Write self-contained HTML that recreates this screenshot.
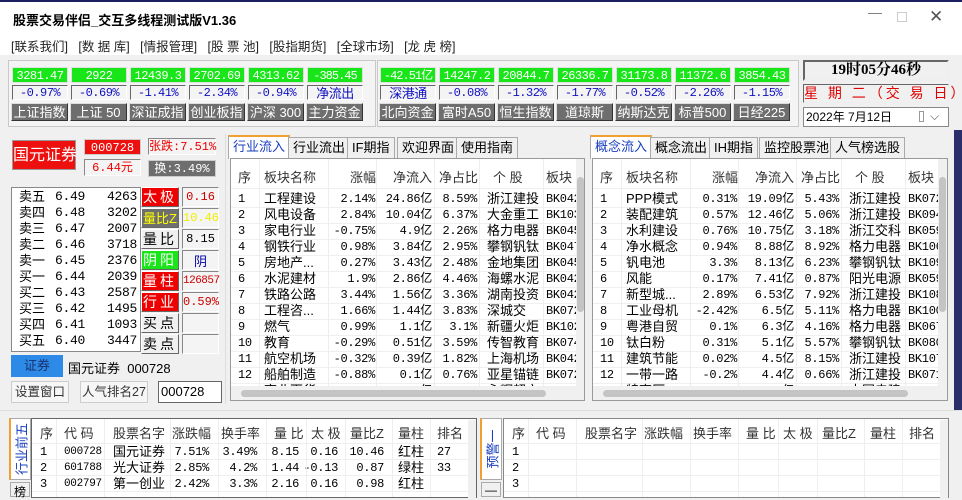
<!DOCTYPE html>
<html><head><meta charset="utf-8"><style>
*{box-sizing:border-box;margin:0;padding:0}
body{width:962px;height:495px;overflow:hidden;background:#f0f0f0;font-family:"Liberation Sans","Noto Sans CJK SC",sans-serif;font-size:12px;color:#000;position:relative}
.a{position:absolute;white-space:nowrap}
.g{position:absolute;height:16px;background:#19e619;color:#fff;font-family:"Liberation Mono","Noto Sans CJK SC",monospace;font-size:12px;text-align:center;line-height:16px;border:1px solid #e0e0e0;letter-spacing:-.5px;overflow:hidden}
.p{position:absolute;height:15px;background:#f4f4f4;color:#1010c0;font-family:"Liberation Mono","Noto Sans CJK SC",monospace;text-align:center;line-height:14px;border:1px solid;border-color:#666 #fff #fff #666;font-size:12px;letter-spacing:-.5px}
.b{position:absolute;height:18px;background:#6e6e6e;color:#fff;text-align:center;line-height:17px;font-size:13px;border:1px solid;border-color:#ddd #333 #333 #ddd}
.fr{position:absolute;border:1px solid #c8c8c8;background:#f4f4f4}
.tab{position:absolute;top:137px;height:21px;border:1px solid #aaa;border-bottom:none;background:#f0f0f0;font-size:13px;line-height:19px;padding:0 4px}
.tab.on{background:#fff;color:#1a3fbf;top:135px;height:24px;border-top:2px solid #f0a030}
.tb{position:absolute;background:#fff;border:1px solid #999;overflow:hidden}
.r{position:absolute;left:0;height:16px;line-height:16px;font-size:13px;white-space:nowrap}
.r span{position:absolute;top:0}
.m{font-family:"Liberation Mono","Noto Sans CJK SC",monospace;font-size:12px;letter-spacing:-.3px}
.s{font-family:"Liberation Mono",monospace;font-size:11px;letter-spacing:-.3px}
.ob{position:absolute;height:16px;line-height:16px;font-size:13px}
.bt{position:absolute;height:20px;width:38px;text-align:center;line-height:19px;font-size:14px;border:1px solid;border-color:#fff #666 #666 #fff;background:#f0f0f0;letter-spacing:3px}
.vl{position:absolute;width:37px;height:20px;text-align:center;line-height:19px;border:1px solid;border-color:#888 #fff #fff #888;background:#f4f4f4;font-family:"Liberation Mono",monospace;font-size:12px;color:#c00}
.hd{color:#333}
.vt{position:absolute;top:418px;width:22px;height:62px;background:#fff;border:1px solid #aaa;border-left:2px solid #f0a030}
.vt div{position:absolute;left:50%;top:50%;transform:translate(-50%,-50%) rotate(-90deg);color:#1a3fbf;font-size:13px;white-space:nowrap}
</style></head><body>
<div class="a" style="left:0;top:0;width:962px;height:2px;background:#1c2060"></div>
<div class="a" style="left:0;top:2px;width:962px;height:31px;background:#fff"></div>
<div class="a" style="left:13px;top:10px;font-size:13px;font-weight:bold">股票交易伴侣_交互多线程测试版V1.36</div>
<div class="a" style="left:868px;top:4px;font-size:14px;color:#777">—</div>
<div class="a" style="left:897px;top:12px;width:10px;height:10px;border:1px solid #ccc"></div>
<div class="a" style="left:929px;top:7px;font-size:17px;color:#555">✕</div>
<div class="a" style="left:0;top:33px;width:962px;height:22px;background:#fff"></div>
<div class="a" style="left:11px;top:36px;font-size:12.5px;color:#222">[联系我们] &nbsp; [数 据 库] &nbsp; [情报管理] &nbsp; [股 票 池] &nbsp; [股指期货] &nbsp; [全球市场] &nbsp; [龙 虎 榜]</div>

<div class="fr" style="left:8px;top:60px;width:368px;height:67px"></div>
<div class="fr" style="left:377px;top:60px;width:422px;height:67px"></div>
<div class="g" style="left:12px;top:67px;width:56px">3281.47</div>
<div class="g" style="left:71px;top:67px;width:56px">2922</div>
<div class="g" style="left:130px;top:67px;width:56px">12439.3</div>
<div class="g" style="left:189px;top:67px;width:56px">2702.69</div>
<div class="g" style="left:248px;top:67px;width:56px">4313.62</div>
<div class="g" style="left:307px;top:67px;width:56px;letter-spacing:-1px">-385.45亿</div>
<div class="g" style="left:380px;top:67px;width:56px;letter-spacing:-1px">-42.51亿</div>
<div class="g" style="left:439px;top:67px;width:56px">14247.2</div>
<div class="g" style="left:498px;top:67px;width:56px">20844.7</div>
<div class="g" style="left:557px;top:67px;width:56px">26336.7</div>
<div class="g" style="left:616px;top:67px;width:56px">31173.8</div>
<div class="g" style="left:675px;top:67px;width:56px">11372.6</div>
<div class="g" style="left:734px;top:67px;width:56px">3854.43</div>
<div class="p" style="left:12px;top:85px;width:56px">-0.97%</div>
<div class="p" style="left:71px;top:85px;width:56px">-0.69%</div>
<div class="p" style="left:130px;top:85px;width:56px">-1.41%</div>
<div class="p" style="left:189px;top:85px;width:56px">-2.34%</div>
<div class="p" style="left:248px;top:85px;width:56px">-0.94%</div>
<div class="p" style="left:307px;top:85px;width:56px;font-family:'Noto Sans CJK SC';font-size:13px">净流出</div>
<div class="p" style="left:380px;top:85px;width:56px;font-family:'Noto Sans CJK SC';font-size:13px">深港通</div>
<div class="p" style="left:439px;top:85px;width:56px">-0.08%</div>
<div class="p" style="left:498px;top:85px;width:56px">-1.32%</div>
<div class="p" style="left:557px;top:85px;width:56px">-1.77%</div>
<div class="p" style="left:616px;top:85px;width:56px">-0.52%</div>
<div class="p" style="left:675px;top:85px;width:56px">-2.26%</div>
<div class="p" style="left:734px;top:85px;width:56px">-1.15%</div>
<div class="b" style="left:11px;top:103px;width:57px">上证指数</div>
<div class="b" style="left:70px;top:103px;width:57px">上证 50</div>
<div class="b" style="left:129px;top:103px;width:57px">深证成指</div>
<div class="b" style="left:188px;top:103px;width:57px">创业板指</div>
<div class="b" style="left:247px;top:103px;width:57px">沪深 300</div>
<div class="b" style="left:306px;top:103px;width:57px">主力资金</div>
<div class="b" style="left:379px;top:103px;width:57px">北向资金</div>
<div class="b" style="left:438px;top:103px;width:57px">富时A50</div>
<div class="b" style="left:497px;top:103px;width:57px">恒生指数</div>
<div class="b" style="left:556px;top:103px;width:57px">道琼斯</div>
<div class="b" style="left:615px;top:103px;width:57px">纳斯达克</div>
<div class="b" style="left:674px;top:103px;width:57px">标普500</div>
<div class="b" style="left:733px;top:103px;width:57px">日经225</div>
<div class="a" style="left:803px;top:60px;width:146px;height:21px;border:2px solid;border-color:#666 #eee #eee #666;background:#f0f0f0;text-align:center;font:bold 15px 'Liberation Serif','Noto Serif CJK SC',serif;line-height:17px">19时05分46秒</div>
<div class="a" style="left:803px;top:84px;width:146px;height:19px;border:1px solid;border-color:#666 #eee #eee #666;background:#f0f0f0;text-align:center;color:#e00000;font-size:14px;line-height:17px;letter-spacing:3px">星 期 二（交 易 日）</div>
<div class="a" style="left:803px;top:107px;width:146px;height:20px;border:1px solid #888;background:#fff;font-size:12px;line-height:18px;padding-left:2px">2022年 7月12日<span style="position:absolute;left:115px;top:3px;width:5px;height:11px;border:1px solid #999"></span><span style="position:absolute;left:126px;top:-1px;color:#555">⌵</span></div>

<div class="a" style="left:12px;top:140px;width:64px;height:30px;background:#ee0f0f;color:#fff;font-size:16px;text-align:center;line-height:30px;border:1px solid #999">国元证券</div>
<div class="a" style="left:84px;top:139px;width:57px;height:16px;background:#ee0f0f;color:#fff;font-family:'Liberation Mono';font-size:12px;text-align:center;line-height:16px;border:1px solid #ccc">000728</div>
<div class="a" style="left:84px;top:159px;width:57px;height:17px;background:#f4f4f4;color:#e00;font-family:'Liberation Mono','Noto Sans CJK SC';font-size:12px;text-align:center;line-height:17px;border:1px solid;border-color:#888 #fff #fff #888">6.44元</div>
<div class="a" style="left:148px;top:138px;width:68px;height:17px;background:#f4f4f4;color:#e00;font-family:'Liberation Mono','Noto Sans CJK SC';font-size:12px;text-align:center;line-height:17px;border:1px solid;border-color:#888 #fff #fff #888">张跌:7.51%</div>
<div class="a" style="left:148px;top:160px;width:68px;height:17px;background:#6e6e6e;color:#fff;font-family:'Liberation Mono','Noto Sans CJK SC';font-size:12px;text-align:center;line-height:17px;border:1px solid #ccc">换:3.49%</div>
<div class="a" style="left:11px;top:187px;width:130px;height:165px;background:#fff;border:1px solid #888"></div>
<div class="ob" style="left:19px;top:189px">卖五</div><div class="ob m" style="left:55px;top:189px">6.49</div><div class="ob m" style="left:107px;top:189px">4263</div>
<div class="ob" style="left:19px;top:205px">卖四</div><div class="ob m" style="left:55px;top:205px">6.48</div><div class="ob m" style="left:107px;top:205px">3202</div>
<div class="ob" style="left:19px;top:221px">卖三</div><div class="ob m" style="left:55px;top:221px">6.47</div><div class="ob m" style="left:107px;top:221px">2007</div>
<div class="ob" style="left:19px;top:237px">卖二</div><div class="ob m" style="left:55px;top:237px">6.46</div><div class="ob m" style="left:107px;top:237px">3718</div>
<div class="ob" style="left:19px;top:253px">卖一</div><div class="ob m" style="left:55px;top:253px">6.45</div><div class="ob m" style="left:107px;top:253px">2376</div>
<div class="ob" style="left:19px;top:269px">买一</div><div class="ob m" style="left:55px;top:269px">6.44</div><div class="ob m" style="left:107px;top:269px">2039</div>
<div class="ob" style="left:19px;top:285px">买二</div><div class="ob m" style="left:55px;top:285px">6.43</div><div class="ob m" style="left:107px;top:285px">2587</div>
<div class="ob" style="left:19px;top:301px">买三</div><div class="ob m" style="left:55px;top:301px">6.42</div><div class="ob m" style="left:107px;top:301px">1495</div>
<div class="ob" style="left:19px;top:317px">买四</div><div class="ob m" style="left:55px;top:317px">6.41</div><div class="ob m" style="left:107px;top:317px">1093</div>
<div class="ob" style="left:19px;top:333px">买五</div><div class="ob m" style="left:55px;top:333px">6.40</div><div class="ob m" style="left:107px;top:333px">3447</div>
<div class="bt" style="left:141px;top:187px;background:#e00;color:#fff">太极</div><div class="vl" style="left:182px;top:187px">0.16</div>
<div class="bt" style="left:141px;top:208px;background:#6e6e6e;color:#ff0;font-size:13px;letter-spacing:0">量比Z</div><div class="vl" style="left:182px;top:208px;color:#ee0">10.46</div>
<div class="bt" style="left:141px;top:229px">量比</div><div class="vl" style="left:182px;top:229px;color:#000">8.15</div>
<div class="bt" style="left:141px;top:250px;background:#19e619;color:#fff">阴阳</div><div class="vl" style="left:182px;top:250px;color:#00a;font-family:'Noto Sans CJK SC';font-size:13px">阴</div>
<div class="bt" style="left:141px;top:271px;background:#e00;color:#fff">量柱</div><div class="vl" style="left:182px;top:271px;font-size:11px;letter-spacing:-.5px">126857</div>
<div class="bt" style="left:141px;top:292px;background:#e00;color:#fff">行业</div><div class="vl" style="left:182px;top:292px">0.59%</div>
<div class="bt" style="left:141px;top:313px">买点</div><div class="vl" style="left:182px;top:313px"></div>
<div class="bt" style="left:141px;top:334px">卖点</div><div class="vl" style="left:182px;top:334px"></div>
<div class="a" style="left:11px;top:355px;width:52px;height:22px;background:#2d8ae6;color:#1a3070;font-size:13px;text-align:center;line-height:22px">证券</div>
<div class="a" style="left:68px;top:358px;font-size:13px">国元证券 &nbsp;000728</div>
<div class="a" style="left:11px;top:381px;width:58px;height:22px;border:1px solid #ccc;background:#f6f6f6;font-size:12.5px;text-align:center;line-height:20px;color:#333">设置窗口</div>
<div class="a" style="left:80px;top:381px;width:68px;height:22px;border:1px solid #ccc;background:#f6f6f6;font-size:12.5px;text-align:center;line-height:20px;color:#333">人气排名27</div>
<div class="a" style="left:158px;top:381px;width:64px;height:22px;border:1px solid #666;background:#fff;font-size:13px;line-height:20px;padding-left:2px">000728</div>

<div class="a" style="left:225px;top:134px;width:1px;height:270px;background:#ddd"></div>
<div class="tab on" style="left:228px">行业流入</div>
<div class="tab" style="left:288px">行业流出</div>
<div class="tab" style="left:347px">IF期指</div>
<div class="tab" style="left:397px">欢迎界面</div>
<div class="tab" style="left:456px">使用指南</div>
<div class="tb" style="left:230px;top:158px;width:355px;height:243px">
<div class="r hd" style="top:11px;width:345px"><span style="left:7px">序</span><span style="left:33px">板块名称</span><span style="right:200px">涨幅</span><span style="right:144px">净流入</span><span style="right:98px">净占比</span><span style="left:262px">个 股</span><span style="left:315px">板块</span></div>
<div style="position:absolute;left:0;top:29px;width:345px;height:1px;background:#eee"></div>
<div id="L"></div>
<div style="position:absolute;left:345px;top:0;width:9px;height:240px;background:#f0f0f0"></div>
<div style="position:absolute;left:346px;top:18px;width:7px;height:135px;border-radius:4px;background:#c4c4c4"></div>
<div style="position:absolute;left:0;top:227px;width:354px;height:14px;background:#f0f0f0"></div>
<div style="position:absolute;left:10px;top:231px;width:305px;height:7px;border-radius:4px;background:#c4c4c4"></div>
</div>

<div class="tab on" style="left:590px">概念流入</div>
<div class="tab" style="left:650px">概念流出</div>
<div class="tab" style="left:709px">IH期指</div>
<div class="tab" style="left:759px">监控股票池</div>
<div class="tab" style="left:830px">人气榜选股</div>
<div class="tb" style="left:592px;top:158px;width:356px;height:243px">
<div class="r hd" style="top:11px;width:345px"><span style="left:7px">序</span><span style="left:33px">板块名称</span><span style="right:200px">涨幅</span><span style="right:144px">净流入</span><span style="right:98px">净占比</span><span style="left:262px">个 股</span><span style="left:315px">板块</span></div>
<div style="position:absolute;left:0;top:29px;width:345px;height:1px;background:#eee"></div>
<div id="R"></div>
<div style="position:absolute;left:345px;top:0;width:10px;height:240px;background:#f0f0f0"></div>
<div style="position:absolute;left:346px;top:18px;width:7px;height:135px;border-radius:4px;background:#c4c4c4"></div>
<div style="position:absolute;left:0;top:227px;width:355px;height:14px;background:#f0f0f0"></div>
<div style="position:absolute;left:10px;top:231px;width:305px;height:7px;border-radius:4px;background:#c4c4c4"></div>
</div>
<div class="a" style="left:954px;top:130px;width:8px;height:280px;background:#2a2e6a"></div>

<div class="a" style="left:0;top:410px;width:962px;height:1px;background:#ddd"></div>
<div class="vt" style="left:9px"><div>行业前五</div></div>
<div class="a" style="left:10px;top:482px;width:20px;height:15px;border:1px solid #aaa;font-size:12px;text-align:center">榜</div>
<div class="a" style="left:31px;top:418px;width:446px;height:80px;background:#fff;border:1px solid #666"></div>
<div class="a" style="left:468px;top:420px;width:8px;height:78px;background:#f0f0f0"></div>
<div class="vt" style="left:480px"><div>预警一</div></div>
<div class="a" style="left:481px;top:482px;width:20px;height:15px;border:1px solid #aaa;font-size:12px;text-align:center">—</div>
<div class="a" style="left:503px;top:418px;width:446px;height:80px;background:#fff;border:1px solid #888"></div>
<div class="a" style="left:940px;top:420px;width:8px;height:78px;background:#f0f0f0"></div>
<div id="B"></div>
<script>
function row(top,cells,base,cls){var h='<div class="r '+(cls||'')+'" style="top:'+top+'px;width:'+base+'px">';cells.forEach(function(c){h+='<span class="'+(c[3]||'')+'" style="'+(c[2]?'right:'+(base-c[0])+'px':'left:'+c[0]+'px')+'">'+c[1]+'</span>'});return h+'</div>';}
var L=[["工程建设","2.14%","24.86亿","8.59%","浙江建投","BK042"],["风电设备","2.84%","10.04亿","6.37%","大金重工","BK103"],["家电行业","-0.75%","4.9亿","2.26%","格力电器","BK045"],["钢铁行业","0.98%","3.84亿","2.95%","攀钢钒钛","BK047"],["房地产...","0.27%","3.43亿","2.48%","金地集团","BK045"],["水泥建材","1.9%","2.86亿","4.46%","海螺水泥","BK042"],["铁路公路","3.44%","1.56亿","3.36%","湖南投资","BK042"],["工程咨...","1.66%","1.44亿","3.83%","深城交","BK072"],["燃气","0.99%","1.1亿","3.1%","新疆火炬","BK102"],["教育","-0.29%","0.51亿","3.59%","传智教育","BK074"],["航空机场","-0.32%","0.39亿","1.82%","上海机场","BK042"],["船舶制造","-0.88%","0.1亿","0.76%","亚星锚链","BK072"],["商业百货","-0.4%","0.06亿","0.12%","永辉超市","BK048"]];
var R=[["PPP模式","0.31%","19.09亿","5.43%","浙江建投","BK072"],["装配建筑","0.57%","12.46亿","5.06%","浙江建投","BK094"],["水利建设","0.76%","10.75亿","3.18%","浙江交科","BK059"],["净水概念","0.94%","8.88亿","8.92%","格力电器","BK106"],["钒电池","3.3%","8.13亿","6.23%","攀钢钒钛","BK109"],["风能","0.17%","7.41亿","0.87%","阳光电源","BK059"],["新型城...","2.89%","6.53亿","7.92%","浙江建投","BK108"],["工业母机","-2.42%","6.5亿","5.11%","格力电器","BK100"],["粤港自贸","0.1%","6.3亿","4.16%","格力电器","BK067"],["钛白粉","0.31%","5.1亿","5.57%","攀钢钒钛","BK080"],["建筑节能","0.02%","4.5亿","8.15%","浙江建投","BK107"],["一带一路","-0.2%","4.4亿","0.66%","浙江建投","BK071"],["特高压","-0.7%","4.17亿","1.69%","中国电建","BK093"]];
function tbl(d){var h='';d.forEach(function(x,i){var t=32+i*16;h+=row(t,[[7,i+1,0,'m'],[33,x[0]],[144,x[1],1,'m'],[201,x[2],1,'m'],[246,x[3],1,'m'],[256,x[4]],[315,x[5],0,'m']],345);h+='<div style="position:absolute;left:0;top:'+(t+16)+'px;width:345px;height:1px;background:#f0f0f0"></div>'});[28,97,145,203,248,312].forEach(function(x){h+='<div style="position:absolute;left:'+x+'px;top:0;width:1px;height:227px;background:#eee"></div>'});return h;}
document.getElementById('L').innerHTML=tbl(L);document.getElementById('R').innerHTML=tbl(R);
var b='';
function hdr(o){return row(426,[[o+8,'序'],[o+32,'代 码'],[o+81,'股票名字'],[o+140,'涨跌幅'],[o+189,'换手率'],[o+242,'量 比'],[o+279,'太 极'],[o+318,'量比Z'],[o+366,'量柱'],[o+405,'排名']],962,'hd');}
b+=hdr(32)+hdr(504);
var D=[["1","000728","国元证券","7.51%","3.49%","8.15","0.16","10.46","红柱","27"],["2","601788","光大证券","2.85%","4.2%","1.44","-0.13","0.87","绿柱","33"],["3","002797","第一创业","2.42%","3.3%","2.16","0.16","0.98","红柱",""]];
D.forEach(function(x,i){var t=444+i*16;b+=row(t,[[40,x[0],0,'m'],[64,x[1],0,'s'],[113,x[2]],[209,x[3],1,'m'],[257,x[4],1,'m'],[299,x[5],1,'m'],[338,x[6],1,'m'],[384,x[7],1,'m'],[398,x[8]],[437,x[9],0,'m']],962);b+=row(t,[[512,x[0],0,'m']],962);});
[56,104,170,218,266,306,345,392,430].forEach(function(x){b+='<div style="position:absolute;left:'+x+'px;top:419px;width:1px;height:78px;background:#eee"></div>';b+='<div style="position:absolute;left:'+(x+472)+'px;top:419px;width:1px;height:78px;background:#eee"></div>'});
[443,459,475,491].forEach(function(y){b+='<div style="position:absolute;left:32px;top:'+y+'px;width:436px;height:1px;background:#eee"></div><div style="position:absolute;left:504px;top:'+y+'px;width:436px;height:1px;background:#eee"></div>'});
document.getElementById('B').innerHTML=b;
</script>
</body></html>
